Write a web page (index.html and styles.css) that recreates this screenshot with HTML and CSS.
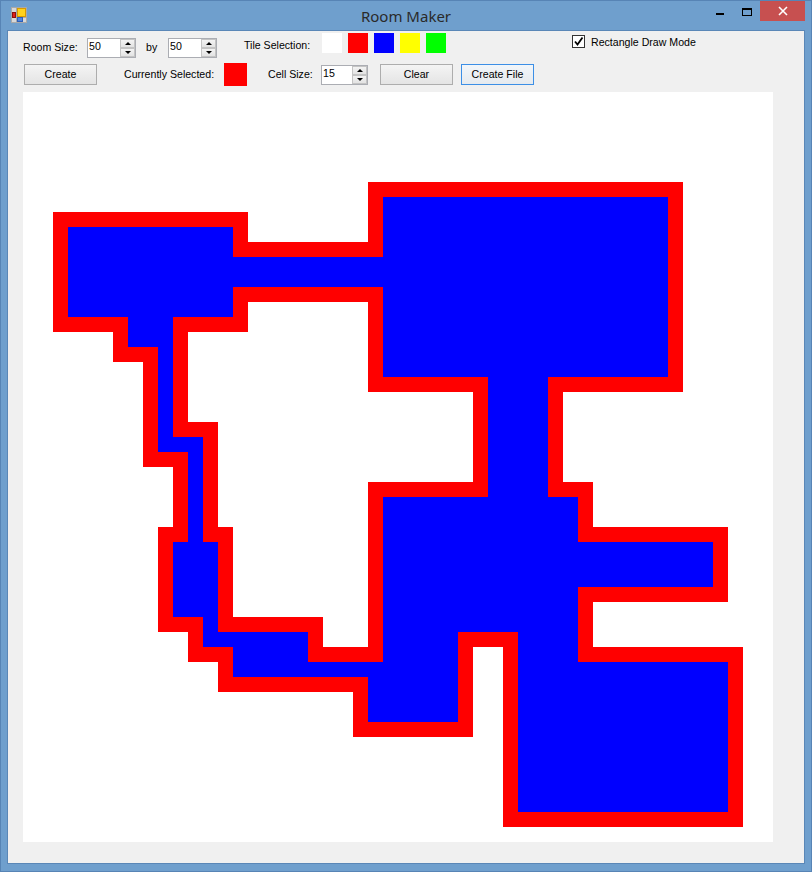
FILE: index.html
```html
<!DOCTYPE html>
<html lang="en">
<head>
<meta charset="utf-8">
<title>Room Maker</title>
<link rel="stylesheet" href="styles.css">
</head>
<body>
<div class="window">
  <div class="titlebar">
    <svg class="app-icon" viewBox="0 0 16 16" width="16" height="16">
      <rect x="0.5" y="0.5" width="15" height="15" fill="#d8d8d8" stroke="#a9a9a9"/>
      <line x1="5.5" y1="0.5" x2="5.5" y2="15.5" stroke="#a9a9a9"/>
      <line x1="0.5" y1="10.5" x2="15.5" y2="10.5" stroke="#a9a9a9"/>
      <rect x="1.5" y="5.5" width="3" height="5" fill="#e0201a" stroke="#8c1010"/>
      <rect x="6.5" y="1.5" width="8" height="8" fill="#ffd21c" stroke="#d79a00"/>
      <rect x="6.5" y="10.5" width="5" height="4" fill="#4f86e0" stroke="#2d5fb8"/>
    </svg>
    <div class="title">Room Maker</div>
    <div class="caption">
      <div class="cbtn cbtn-min"><span class="glyph-min"></span></div>
      <div class="cbtn cbtn-max"><span class="glyph-max"></span></div>
      <div class="cbtn cbtn-close">
        <svg viewBox="0 0 10 10" width="10" height="10"><path d="M1 1 L9 9 M9 1 L1 9" stroke="#fff" stroke-width="1.6"/></svg>
      </div>
    </div>
  </div>

  <div class="client">
    <div class="row row1">
      <span class="lbl lbl-room">Room Size:</span>
      <div class="num num-size">
        <span class="num-val">50</span>
        <div class="spin"><span class="spin-btn"><i class="arr-up"></i></span><span class="spin-btn"><i class="arr-down"></i></span></div>
      </div>
      <span class="lbl lbl-by">by</span>
      <div class="num num-size">
        <span class="num-val">50</span>
        <div class="spin"><span class="spin-btn"><i class="arr-up"></i></span><span class="spin-btn"><i class="arr-down"></i></span></div>
      </div>
      <span class="lbl lbl-tile">Tile Selection:</span>
      <div class="swatches">
        <span class="swatch sw-white"></span>
        <span class="swatch sw-red"></span>
        <span class="swatch sw-blue"></span>
        <span class="swatch sw-yellow"></span>
        <span class="swatch sw-green"></span>
      </div>
      <div class="check">
        <span class="check-box">
          <svg viewBox="0 0 11 11" width="11" height="11"><path d="M2 5.5 L4.5 8.5 L9.5 1.5" fill="none" stroke="#000" stroke-width="1.8"/></svg>
        </span>
        <span class="lbl check-lbl">Rectangle Draw Mode</span>
      </div>
    </div>

    <div class="row row2">
      <div class="btn btn-create">Create</div>
      <span class="lbl lbl-current">Currently Selected:</span>
      <span class="current"></span>
      <span class="lbl lbl-cell">Cell Size:</span>
      <div class="num num-cell">
        <span class="num-val">15</span>
        <div class="spin"><span class="spin-btn"><i class="arr-up"></i></span><span class="spin-btn"><i class="arr-down"></i></span></div>
      </div>
      <div class="btn btn-clear">Clear</div>
      <div class="btn btn-file">Create File</div>
    </div>

    <div class="canvas">
      <svg viewBox="0 0 50 50" width="750" height="750" shape-rendering="crispEdges">
        <g fill="#ff0000">
          <rect x="2" y="8" width="13" height="8"/>
          <rect x="13" y="10" width="12" height="4"/>
          <rect x="23" y="6" width="21" height="14"/>
          <rect x="6" y="14" width="5" height="4"/>
          <rect x="8" y="16" width="3" height="8"/>
          <rect x="8" y="22" width="5" height="3"/>
          <rect x="10" y="23" width="3" height="8"/>
          <rect x="9" y="29" width="5" height="7"/>
          <rect x="11" y="34" width="3" height="3"/>
          <rect x="11" y="35" width="9" height="3"/>
          <rect x="13" y="36" width="7" height="3"/>
          <rect x="13" y="37" width="17" height="3"/>
          <rect x="22" y="38" width="8" height="5"/>
          <rect x="23" y="26" width="15" height="11"/>
          <rect x="23" y="35" width="7" height="4"/>
          <rect x="30" y="18" width="6" height="10"/>
          <rect x="32" y="26" width="6" height="23"/>
          <rect x="36" y="29" width="11" height="5"/>
          <rect x="32" y="37" width="16" height="12"/>
        </g>
        <g fill="#0000ff">
          <rect x="3" y="9" width="11" height="6"/>
          <rect x="14" y="11" width="10" height="2"/>
          <rect x="24" y="7" width="19" height="12"/>
          <rect x="7" y="15" width="3" height="2"/>
          <rect x="9" y="17" width="1" height="6"/>
          <rect x="9" y="23" width="3" height="1"/>
          <rect x="11" y="24" width="1" height="6"/>
          <rect x="10" y="30" width="3" height="5"/>
          <rect x="12" y="35" width="1" height="1"/>
          <rect x="12" y="36" width="7" height="1"/>
          <rect x="14" y="37" width="5" height="1"/>
          <rect x="14" y="38" width="15" height="1"/>
          <rect x="23" y="39" width="6" height="3"/>
          <rect x="24" y="27" width="13" height="9"/>
          <rect x="24" y="36" width="5" height="2"/>
          <rect x="31" y="19" width="4" height="8"/>
          <rect x="33" y="27" width="4" height="21"/>
          <rect x="37" y="30" width="9" height="3"/>
          <rect x="33" y="38" width="14" height="10"/>
        </g>
      </svg>
    </div>
  </div>
</div>
</body>
</html>
```

FILE: styles.css
```css
html, body {
  margin: 0;
  padding: 0;
}

body {
  background: #6f9fcd;
  font-family: "Liberation Sans", Arial, sans-serif;
  color: #000;
}

.window {
  width: 812px;
  height: 872px;
  box-sizing: border-box;
  border: 1px solid #5784b5;
  background: #6f9fcd;
  display: flex;
  flex-direction: column;
}

/* ---------- title bar ---------- */
.titlebar {
  height: 30px;
  flex: none;
  display: grid;
  grid-template-columns: 1fr auto 1fr;
  align-items: start;
}

.app-icon {
  display: block;
  margin: 6px 0 0 10px;
}

.title {
  font-family: "Noto Sans", "Open Sans", sans-serif;
  font-size: 15px;
  line-height: 30px;
  color: #2a2a2a;
  white-space: nowrap;
}

.caption {
  justify-self: end;
  display: flex;
  margin-right: 6px;
}

.cbtn {
  height: 20px;
  display: flex;
  justify-content: center;
  align-items: flex-start;
}

.cbtn-min { width: 26px; }
.cbtn-max { width: 27px; }

.cbtn-close {
  width: 45px;
  background: #c75050;
  align-items: center;
}

.cbtn-close svg { display: block; }

.glyph-min {
  display: block;
  width: 8px;
  height: 2px;
  margin-top: 12px;
  background: #000;
}

.glyph-max {
  display: block;
  box-sizing: border-box;
  width: 10px;
  height: 8px;
  margin-top: 7px;
  border: 1px solid #000;
  border-top-width: 2px;
}

/* ---------- client area ---------- */
.client {
  flex: 1;
  margin: 0 7px 8px 7px;
  background: #f0f0f0;
  box-shadow: 0 0 0 1px #5a87b7;
  padding: 2px 0 0 15px;
  display: flex;
  flex-direction: column;
}

.row {
  display: flex;
  align-items: flex-start;
  flex: none;
}

.row1 { height: 29px; }
.row2 { height: 30px; }

.lbl {
  font-size: 10.6px;
  line-height: 13px;
  white-space: nowrap;
}

.lbl-room { width: 64px; margin-top: 8px; }
.lbl-by { width: 22px; margin-left: 10px; margin-top: 8px; }
.lbl-tile { width: 78px; margin-left: 27px; margin-top: 6px; }
.lbl-current { width: 100px; margin-left: 27px; margin-top: 6px; }
.lbl-cell { width: 53px; margin-left: 21px; margin-top: 6px; }

/* numeric up-down */
.num {
  box-sizing: border-box;
  height: 20px;
  border: 1px solid #abadb3;
  background: #fff;
  display: flex;
}

.num-size { width: 49px; margin-top: 5px; }
.num-cell { width: 47px; margin-top: 3px; }

.num-val {
  flex: 1;
  font-size: 10.6px;
  line-height: 13px;
  padding: 1px 0 0 1px;
}

.spin {
  width: 15px;
  display: flex;
  flex-direction: column;
}

.spin-btn {
  flex: 1;
  box-sizing: border-box;
  border: 1px solid #c4c4c4;
  background: linear-gradient(#f3f3f3, #e3e3e3);
  display: flex;
  align-items: center;
  justify-content: center;
}

.arr-up, .arr-down {
  display: block;
  width: 0;
  height: 0;
  border-left: 3px solid transparent;
  border-right: 3px solid transparent;
}

.arr-up { border-bottom: 3px solid #000; }
.arr-down { border-top: 3px solid #000; }

/* tile swatches */
.swatches {
  display: flex;
  gap: 6px;
}

.swatch {
  display: block;
  width: 20px;
  height: 20px;
}

.sw-white { background: #ffffff; }
.sw-red { background: #ff0000; }
.sw-blue { background: #0000ff; }
.sw-yellow { background: #ffff00; }
.sw-green { background: #00ff00; }

/* checkbox */
.check {
  display: flex;
  align-items: flex-start;
  margin-left: 126px;
}

.check-box {
  box-sizing: border-box;
  width: 13px;
  height: 13px;
  margin-top: 2px;
  border: 1px solid #333;
  background: #fff;
  display: flex;
  align-items: center;
  justify-content: center;
}

.check-box svg { display: block; }

.check-lbl {
  margin-left: 6px;
  margin-top: 3px;
}

/* buttons */
.btn {
  box-sizing: border-box;
  width: 73px;
  height: 21px;
  margin-top: 2px;
  border: 1px solid #adadad;
  background: linear-gradient(#f4f4f4, #e4e4e4);
  font-size: 10.6px;
  line-height: 19px;
  text-align: center;
  white-space: nowrap;
}

.btn-create { margin-left: 1px; }
.btn-clear { margin-left: 12px; }

.btn-file {
  margin-left: 8px;
  border-color: #3c8fe6;
  background: linear-gradient(#f2f6fa, #e6eaee);
}

.current {
  display: block;
  width: 23px;
  height: 23px;
  margin-top: 1px;
  background: #ff0000;
}

/* drawing canvas */
.canvas {
  width: 750px;
  height: 750px;
  background: #fff;
  flex: none;
}

.canvas svg { display: block; }
```
